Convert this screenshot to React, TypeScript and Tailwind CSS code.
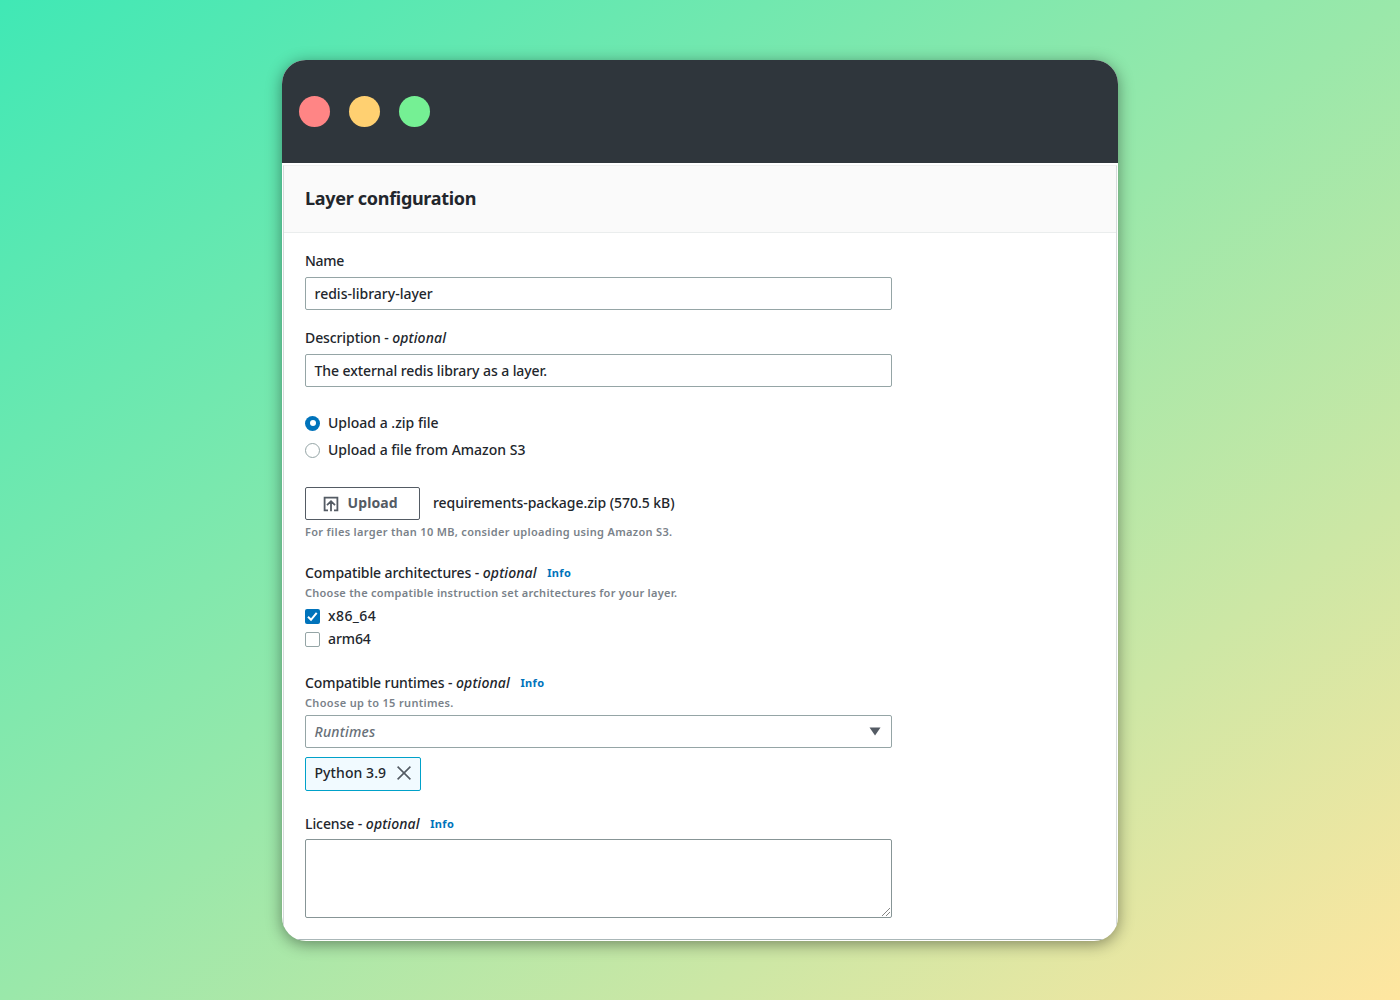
import type { ReactNode } from "react";

const font = 'font-["Noto_Sans","Open_Sans",sans-serif]';

function Label({ text, optional, info, className }: { text: string; optional?: boolean; info?: boolean; className: string }) {
  return (
    <div className="flex h-5 items-center whitespace-pre">
      <span className={className}>
        {text}
        {optional && (
          <>
            {" - "}
            <em className="tracking-[0.13px]">optional</em>
          </>
        )}
      </span>
      {info && <a className="ml-[10.5px] mt-[2px] text-[11px] font-bold tracking-[0.35px] text-[#0073bb]">Info</a>}
    </div>
  );
}

function Field({ children }: { children: ReactNode }) {
  return (
    <div className="flex h-[33px] w-[587px] items-center justify-between rounded-[2px] border border-[#95a5a6] bg-white px-[8.5px]">
      {children}
    </div>
  );
}

export default function App() {
  return (
    <div className={`flex h-[1000px] w-[1400px] justify-center overflow-hidden bg-[linear-gradient(to_bottom_right,#40e8b5,#9ae8aa_50%,#ffe6a0)] pt-[59.5px] text-[14px] font-medium text-[#22262c] ${font}`}>
      <main className="flex h-[881px] w-[836px] flex-col overflow-hidden rounded-[24px] bg-white shadow-[0_3px_16px_rgba(0,0,0,0.42)]">
        <div className="flex h-[103.5px] shrink-0 items-center gap-[19px] bg-[#2f363c] pl-[16.5px]">
          <span className="size-[31px] rounded-full bg-[#ff8585]" />
          <span className="size-[31px] rounded-full bg-[#ffd071]" />
          <span className="size-[31px] rounded-full bg-[#75f094]" />
        </div>
        <div className="mx-[1px] mt-[2px] mb-[1px] flex grow flex-col border border-b-[#aab7b8] border-[#d5dbdb] border-t-[#f0f1f1]">
          <header className="flex h-[67px] shrink-0 items-center border-b border-[#eaeded] bg-[#fafafa] pb-[2px] pl-[21px]">
            <h1 className="text-[18px] font-bold tracking-[-0.3px]">Layer configuration</h1>
          </header>
          <form className="flex flex-col pt-[17px] pl-[21px]">
            <Label text="Name" className="tracking-[-0.3px]" />
            <div className="h-[7px]" />
            <Field><span>redis-library-layer</span></Field>
            <div className="h-[17px]" />
            <Label text="Description" optional className="tracking-[-0.1px]" />
            <div className="h-[7px]" />
            <Field><span className="tracking-[-0.08px]">The external redis library as a layer.</span></Field>

            <div className="mt-[26px] flex h-5 items-center gap-2">
              <span className="flex size-[15px] items-center justify-center rounded-full bg-[#0073bb]">
                <span className="size-[6px] rounded-full bg-white" />
              </span>
              <span className="mt-[-2px]">Upload a .zip file</span>
            </div>
            <div className="mt-[7px] flex h-5 items-center gap-2">
              <span className="size-[15px] rounded-full border border-[#95a5a6]" />
              <span className="mt-[-2px]">Upload a file from Amazon S3</span>
            </div>

            <div className="mt-[27px] flex h-[33px] items-center">
              <button type="button" className="flex h-[33px] w-[115px] items-center rounded-[2px] border border-[#545b64] pl-[17px] font-bold text-[#545b64]">
                <svg viewBox="0 0 16 16" className="mr-[8.5px] size-[16px]" fill="none" stroke="currentColor" strokeWidth="1.8">
                  <path d="M5 14.3H1.6V1.6h12.8v12.7H11M8 15.2V6M4 9.2l4-4 4 4" />
                </svg>
                <span className="mt-[-2px] tracking-[0.12px]">Upload</span>
              </button>
              <span className="mt-[-2px] ml-[13px] tracking-[-0.05px]">requirements-package.zip (570.5 kB)</span>
            </div>
            <p className="mt-[4px] h-4 text-[11px] leading-4 font-semibold tracking-[0.32px] text-[#7a828a]">
              <span>For files larger than 10 MB, consider uploading using Amazon S3.</span>
            </p>

            <div className="h-[22px]" />
            <Label text="Compatible architectures" optional info className="tracking-[-0.1px]" />
            <p className="mt-[3px] h-4 text-[11px] leading-4 font-semibold tracking-[0.26px] text-[#7a828a]">
              <span>Choose the compatible instruction set architectures for your layer.</span>
            </p>
            <div className="mt-[5px] flex h-5 items-center gap-2">
              <span className="flex size-[15px] items-center justify-center rounded-[2px] bg-[#0073bb]">
                <svg viewBox="0 0 15 15" className="size-[15px]" fill="none" stroke="white" strokeWidth="2">
                  <path d="m3 7.8 3 3 5.7-7" />
                </svg>
              </span>
              <span className="mt-[-1px] tracking-[0.4px]">x86_64</span>
            </div>
            <div className="mt-[3px] flex h-5 items-center gap-2">
              <span className="size-[15px] rounded-[2px] border border-[#95a5a6]" />
              <span className="mt-[-1px] tracking-[-0.1px]">arm64</span>
            </div>

            <div className="h-[23px]" />
            <Label text="Compatible runtimes" optional info className="tracking-[-0.1px]" />
            <p className="mt-[3px] mb-[4px] h-4 text-[11px] leading-4 font-semibold tracking-[0.33px] text-[#7a828a]">
              <span>Choose up to 15 runtimes.</span>
            </p>
            <Field>
              <em className="mt-[-1px] tracking-[0.2px] text-[#687078]">Runtimes</em>
              <svg viewBox="0 0 12 9" className="mr-[2px] h-[9px] w-[12px]" fill="#545b64">
                <path d="M.5.5h11L6 8.5z" />
              </svg>
            </Field>
            <div className="mt-[9px] flex h-[34px] w-[116px] items-center justify-between rounded-[2px] border border-[#00a1c9] bg-[#f1faff] pr-[9.5px] pl-[8.5px]">
              <span className="mt-[-3px] tracking-[0.08px]">Python 3.9</span>
              <svg viewBox="0 0 14 14" className="mt-[-2px] size-[14px]" fill="none" stroke="#545b64" strokeWidth="1.6">
                <path d="m.6.6 12.8 12.8M13.4.6.6 13.4" />
              </svg>
            </div>

            <div className="h-[22px]" />
            <Label text="License" optional info className="tracking-[-0.08px]" />
            <div className="mt-[6px] flex h-[79px] w-[587px] items-end justify-end rounded-[2px] border border-[#879596]">
              <svg viewBox="0 0 10 10" className="size-[10px]" fill="none" stroke="#777" strokeWidth="0.9">
                <path d="M1 9 9 1M5 9l4-4" />
              </svg>
            </div>
          </form>
        </div>
      </main>
    </div>
  );
}
